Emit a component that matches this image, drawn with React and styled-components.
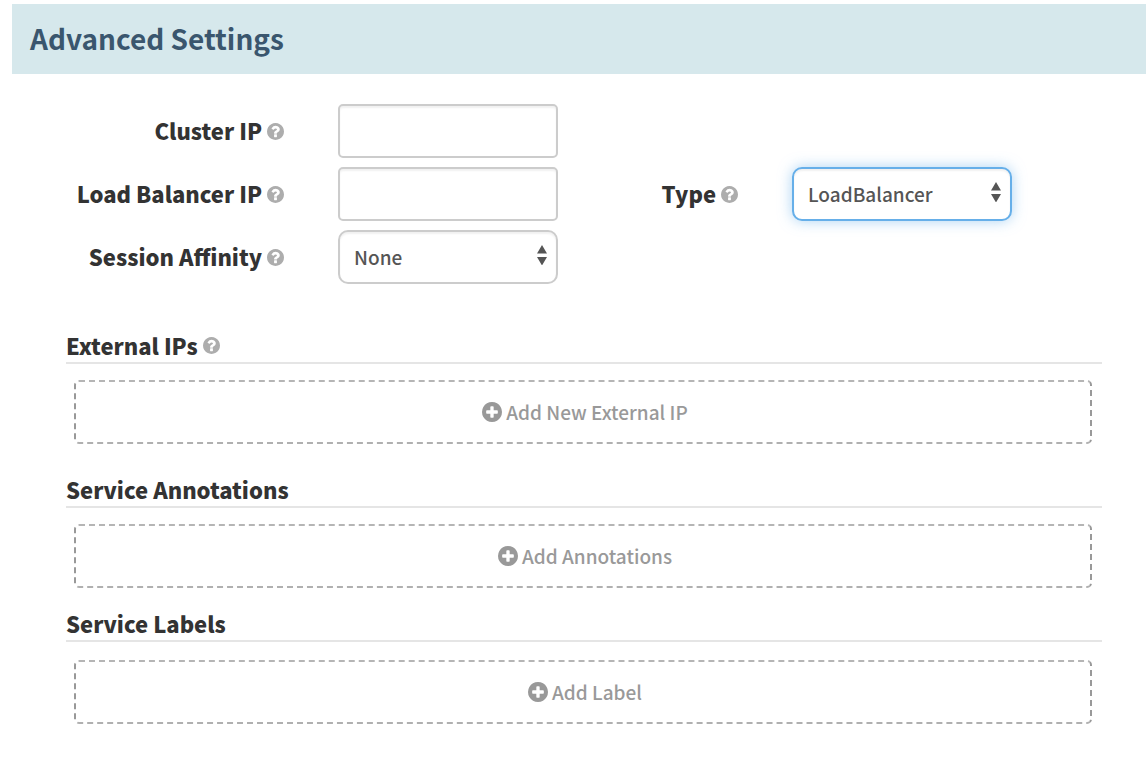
import React from "react";
import styled, { createGlobalStyle, css } from "styled-components";

const GlobalStyle = createGlobalStyle`
  *, *::before, *::after { box-sizing: border-box; }
  body {
    margin: 0;
    background: #fff;
    color: #333;
    font-family: "Noto Sans CJK SC", "Open Sans", sans-serif;
    font-size: 19px;
    font-weight: 500;
    line-height: 32px;
  }
`;

const Page = styled.main`
  padding: 4px 0 48px 12px;
`;

const Header = styled.header`
  display: flex;
  align-items: center;
  height: 70px;
  padding: 0 18px 2px;
  background: #d6e8ec;
`;

const Title = styled.h1`
  margin: 0;
  color: #3a566e;
  font-size: 28px;
  line-height: 40px;
  font-weight: 700;
`;

const Body = styled.form`
  padding: 30px 44px 0 54px;
`;

const Fields = styled.div`
  display: grid;
  grid-template-columns: 218fr 220fr 126fr 220fr 36fr;
  column-gap: 54px;
  row-gap: 9px;
  align-items: center;
  margin-bottom: 46px;
`;

const LabelCell = styled.div`
  grid-column: ${(p) => p.$column};
  display: flex;
  align-items: center;
  justify-content: flex-end;
  gap: 5px;
`;

const Label = styled.label`
  padding-bottom: 2px;
  font-size: 22px;
  font-weight: 900;
  white-space: nowrap;
`;

const HelpButton = styled.button`
  display: flex;
  padding: 0;
  border: 0;
  background: none;
  color: #adadad;
  cursor: help;
`;

const activeField = css`
  border-color: #66afe9;
  box-shadow: inset 0 2px 2px rgba(0, 0, 0, 0.06), 0 0 14px rgba(102, 175, 233, 0.55);
`;

const field = css`
  width: 100%;
  height: 54px;
  padding: 0 14px;
  border: 2px solid #ccc;
  background: #fff;
  color: #555;
  font: inherit;
  outline: none;
  box-shadow: inset 0 2px 2px rgba(0, 0, 0, 0.06);
  &:focus { ${activeField} }
`;

const TextInput = styled.input`
  ${field}
  border-radius: 5px;
`;

const SelectWrap = styled.div`
  display: grid;
  align-items: center;
`;

const Select = styled.select`
  ${field}
  grid-area: 1 / 1;
  appearance: none;
  border-radius: 10px;
  ${(p) => p.$active && activeField}
`;

const Arrows = styled.svg`
  grid-area: 1 / 1;
  justify-self: end;
  width: 10px;
  height: 20px;
  margin: 0 11px 4px 0;
  fill: #555;
  pointer-events: none;
`;

const Section = styled.section`
  margin-bottom: ${(p) => p.$after}px;
`;

const SectionHead = styled.div`
  display: flex;
  align-items: center;
  gap: 5px;
  margin-bottom: ${(p) => p.$gap}px;
  padding-bottom: 2px;
  border-bottom: 2px solid #e5e5e5;
`;

const SectionTitle = styled.h2`
  margin: 0;
  font-size: 22px;
  line-height: 30px;
  font-weight: 900;
`;

const AddArea = styled.div`
  padding: 0 10px 0 8px;
`;

const AddButton = styled.button`
  display: flex;
  align-items: center;
  justify-content: center;
  gap: 4px;
  width: 100%;
  height: 64px;
  padding: 0 4px 0 8px;
  border: 2px dashed #999;
  border-top-color: #b5b5b5;
  border-bottom-color: #b0b0b0;
  border-radius: 5px;
  background: #fff;
  color: #999;
  font: inherit;
  cursor: pointer;
`;

const Glyph = styled.svg`
  display: block;
  width: ${(p) => p.$size}px;
  height: ${(p) => p.$size}px;
  fill: currentColor;
`;

const disc =
  "q0 209-103 385.5t-279.5 279.5-385.5 103-385.5-103-279.5-279.5-103-385.5 103-385.5 279.5-279.5 385.5-103 385.5 103 279.5 279.5 103 385.5z";

function Help({ topic }) {
  return (
    <HelpButton type="button" aria-label={`Help: ${topic}`}>
      <Glyph $size={17} viewBox="128 128 1536 1536" aria-hidden="true">
        <path
          d={`M1024 1376v-192q0-14-9-23t-23-9h-192q-14 0-23 9t-9 23v192q0 14 9 23t23 9h192q14 0 23-9t9-23zm256-672q0-88-55.5-163t-138.5-116-170-41q-243 0-371 213-15 24 8 42l132 100q7 6 19 6 16 0 25-12 53-68 86-92 34-24 86-24 48 0 85.5 26t37.5 59q0 38-20 61t-68 45q-63 28-115.5 86.5t-52.5 125.5v36q0 14 9 23t23 9h192q14 0 23-9t9-23q0-19 21.5-49.5t54.5-49.5q32-18 49-28.5t46-35 44.5-48 28-60.5 12.5-81zm384 192${disc}`}
        />
      </Glyph>
    </HelpButton>
  );
}

function PlusIcon() {
  return (
    <Glyph $size={20} viewBox="128 128 1536 1536" aria-hidden="true">
      <path
        d={`M1344 960v-128q0-26-19-45t-45-19h-256v-256q0-26-19-45t-45-19h-128q-26 0-45 19t-19 45v256h-256q-26 0-45 19t-19 45v128q0 26 19 45t45 19h256v256q0 26 19 45t45 19h128q26 0 45-19t19-45v-256h256q26 0 45-19t19-45zm320-64${disc}`}
      />
    </Glyph>
  );
}

function FieldLabel({ htmlFor, column = 1, children }) {
  return (
    <LabelCell $column={column}>
      <Label htmlFor={htmlFor}>{children}</Label>
      <Help topic={children} />
    </LabelCell>
  );
}

function Dropdown({ id, options, active }) {
  return (
    <SelectWrap>
      <Select id={id} defaultValue={options[0]} $active={active}>
        {options.map((o) => (
          <option key={o}>{o}</option>
        ))}
      </Select>
      <Arrows viewBox="0 0 10 20" aria-hidden="true">
        <path d="M5 0L10 8.500H0zM0 12h10L5 20.500z" />
      </Arrows>
    </SelectWrap>
  );
}

function AddSection({ title, action, help, gap = 16, after = 20 }) {
  return (
    <Section $after={after}>
      <SectionHead $gap={gap}>
        <SectionTitle>{title}</SectionTitle>
        {help && <Help topic={title} />}
      </SectionHead>
      <AddArea>
        <AddButton type="button">
          <PlusIcon />
          {action}
        </AddButton>
      </AddArea>
    </Section>
  );
}

export default function App() {
  return (
    <>
      <GlobalStyle />
      <Page>
        <Header>
          <Title>Advanced Settings</Title>
        </Header>
        <Body>
          <Fields>
            <FieldLabel htmlFor="cluster-ip">Cluster IP</FieldLabel>
            <TextInput id="cluster-ip" type="text" />
            <FieldLabel htmlFor="lb-ip">Load Balancer IP</FieldLabel>
            <TextInput id="lb-ip" type="text" />
            <FieldLabel htmlFor="type" column={3}>Type</FieldLabel>
            <Dropdown id="type" options={["LoadBalancer", "ClusterIP", "NodePort"]} active />
            <FieldLabel htmlFor="affinity">Session Affinity</FieldLabel>
            <Dropdown id="affinity" options={["None", "ClientIP"]} />
          </Fields>
          <AddSection title="External IPs" action="Add New External IP" help after={30} />
          <AddSection title="Service Annotations" action="Add Annotations" />
          <AddSection title="Service Labels" action="Add Label" gap={18} />
        </Body>
      </Page>
    </>
  );
}
